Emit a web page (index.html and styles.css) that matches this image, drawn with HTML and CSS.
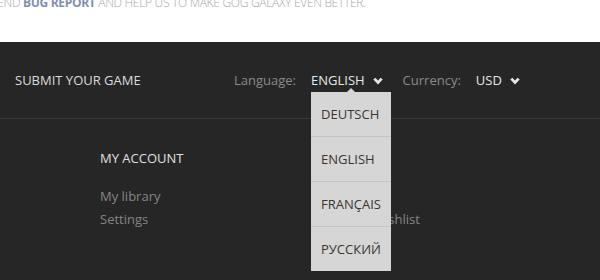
FILE: index.html
```html
<!DOCTYPE html>
<html>
<head>
<meta charset="UTF-8">
<title>footer</title>
<link rel="stylesheet" href="styles.css">
</head>
<body>
<div class="top_note">
  <p>SEND <b>BUG REPORT</b> AND HELP US TO MAKE GOG GALAXY EVEN BETTER.</p>
</div>
<div class="footer">
  <div class="footer_bar">
    <a class="submit_link">SUBMIT YOUR GAME</a>
    <div class="settings">
      <span class="label">Language:</span>
      <span class="select lang_select">ENGLISH
        <svg class="chev" width="10" height="8" viewBox="0 0 10 8"><polyline points="1.3,1.6 5,5.5 8.7,1.6" fill="none" stroke="#e4e4e4" stroke-width="2.8"/></svg>
        <div class="dropdown">
          <div class="dd_item">DEUTSCH</div>
          <div class="dd_item">ENGLISH</div>
          <div class="dd_item">FRANÇAIS</div>
          <div class="dd_item">РУССКИЙ</div>
        </div>
      </span>
      <span class="label">Currency:</span>
      <span class="select">USD
        <svg class="chev" width="10" height="8" viewBox="0 0 10 8"><polyline points="1.3,1.6 5,5.5 8.7,1.6" fill="none" stroke="#e4e4e4" stroke-width="2.8"/></svg>
      </span>
    </div>
  </div>
  <div class="footer_links">
    <div class="col">
      <div class="col_title">MY ACCOUNT</div>
      <a class="col_link">My library</a>
      <a class="col_link">Settings</a>
    </div>
    <div class="col">
      <div class="col_title">&nbsp;</div>
      <a class="col_link">&nbsp;</a>
      <a class="col_link">Wishlist</a>
    </div>
  </div>
</div>
</body>
</html>
```

FILE: styles.css
```css
html, body {
  margin: 0px;
  height: 100%;
  overflow: hidden;
}
body {
  font-family: "Open Sans", "Liberation Sans", sans-serif;
  background: #262626;
}

.top_note {
  height: 42px;
  background: #ffffff;
  overflow: hidden;
}
.top_note p {
  margin: -4px 0 0 -9px;
  font-size: 12px;
  font-weight: 300;
  letter-spacing: -0.3px;
  line-height: 14px;
  color: #a8a8a8;
  white-space: nowrap;
}
.top_note b {
  font-weight: 700;
  color: #7f90ad;
}

.footer_bar {
  height: 76px;
  border-bottom: 1px solid #383838;
  display: flex;
  align-items: center;
  padding-left: 15px;
  font-size: 13px;
}
.submit_link {
  color: #dcdcdc;
  width: 219px;
}
.settings {
  display: flex;
  align-items: center;
}
.label {
  color: #8a8a8a;
  margin-right: 15px;
}
.select {
  color: #e8e8e8;
  margin-right: 20px;
  display: flex;
  align-items: center;
  position: relative;
}
.chev {
  margin-left: 8px;
  margin-top: 1px;
}

.dropdown {
  position: absolute;
  left: 0;
  top: 21px;
  width: 80px;
  background: #d6d6d6;
  z-index: 5;
}
.dropdown:before {
  content: "";
  position: absolute;
  top: -4px;
  left: 36px;
  border-left: 4px solid transparent;
  border-right: 4px solid transparent;
  border-bottom: 4px solid #d6d6d6;
}
.dd_item {
  height: 44px;
  line-height: 44px;
  padding-left: 10px;
  color: #3a3530;
  border-top: 1px solid #c4c4c4;
}
.dd_item:first-child {
  border-top: none;
}

.footer_links {
  display: flex;
  padding: 30px 0 0 100px;
  font-size: 13px;
}
.col {
  display: flex;
  flex-direction: column;
  flex: none;
  width: 273px;
}
.col_title {
  color: #e0e0e0;
  height: 18px;
  margin-bottom: 20px;
}
.col_link {
  color: #858585;
  height: 23px;
}
```
